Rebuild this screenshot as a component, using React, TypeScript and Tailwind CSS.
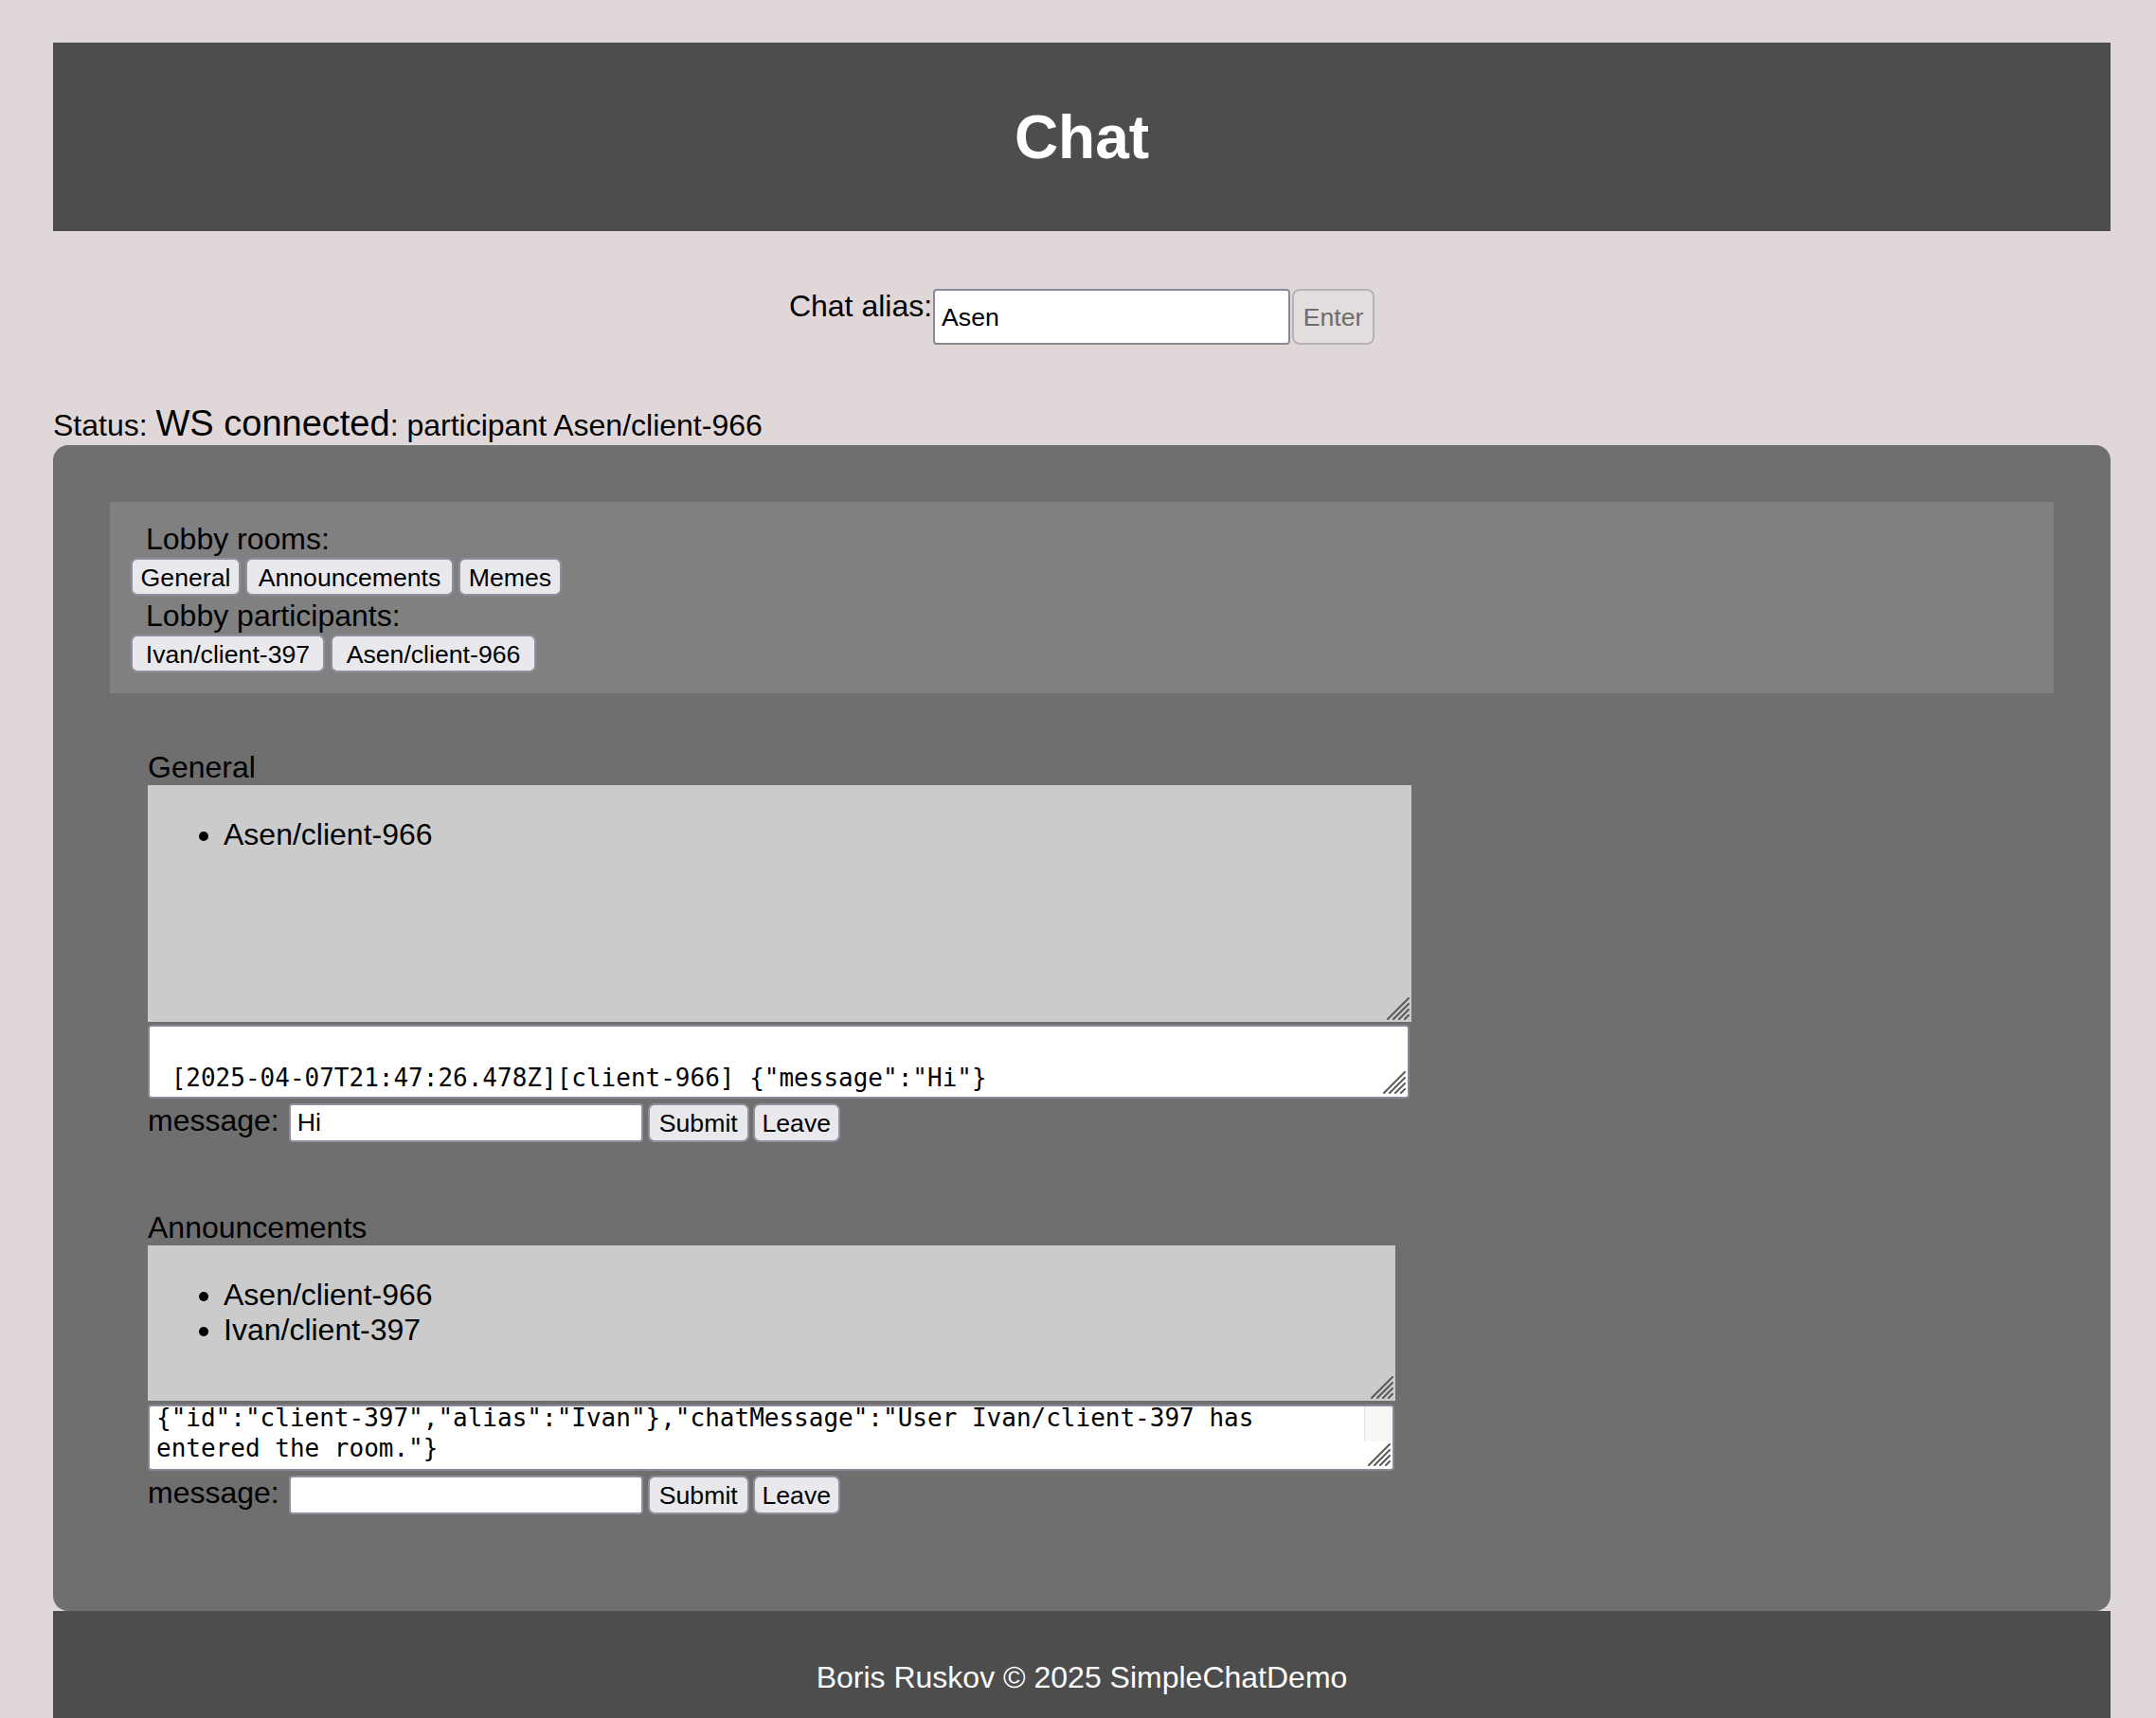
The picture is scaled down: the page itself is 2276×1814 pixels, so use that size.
import React from "react";

function ResizeHandle({ className }: { className: string }) {
  return (
    <svg className={className} width="24" height="24" viewBox="0 0 24 24" aria-hidden="true">
      <g stroke="#5a5a5a" strokeWidth="2" strokeLinecap="round">
        <line x1="1" y1="23" x2="23" y2="1" />
        <line x1="7" y1="23" x2="23" y2="7" />
        <line x1="13" y1="23" x2="23" y2="13" />
        <line x1="19" y1="23" x2="23" y2="19" />
      </g>
    </svg>
  );
}

function Btn({ label, w, h = "h-[40px]" }: { label: string; w: string; h?: string }) {
  return (
    <button
      className={`${w} ${h} shrink-0 rounded-[7px] border-2 border-[#8f8f9d] bg-[#e9e9ed] pt-[2px] text-[26.67px] leading-none text-black whitespace-nowrap flex items-center justify-center`}
    >
      {label}
    </button>
  );
}

function MessageRow({ value }: { value: string }) {
  return (
    <div className="flex items-start mt-[5px]">
      <span className="leading-[37px]">message:</span>
      <input
        defaultValue={value}
        className="ml-[10px] w-[374px] h-[41px] rounded-[4px] border-2 border-[#8f8f9d] bg-white pl-[7px] text-[26.67px] text-black outline-none"
      />
      <div className="flex gap-[4px] ml-[5px]">
        <Btn label="Submit" w="w-[107px]" h="h-[41px]" />
        <Btn label="Leave" w="w-[92px]" h="h-[41px]" />
      </div>
    </div>
  );
}

export default function App() {
  return (
    <div className="min-h-screen bg-[#e0d8d8] pl-[56px] pr-[48px] pt-[45px] font-['Liberation_Sans',Arial,sans-serif] text-[32px] text-black">
      {/* Header */}
      <header className="h-[199px] bg-[#4d4d4d] flex items-center justify-center">
        <h1 className="text-[64px] font-bold text-white leading-none">Chat</h1>
      </header>

      {/* Alias row */}
      <div className="mt-[61px] flex justify-center items-start">
        <span className="leading-[37px]">Chat alias:</span>
        <input
          defaultValue="Asen"
          className="ml-[1px] w-[377px] h-[59px] rounded-[4px] border-2 border-[#8a8995] bg-white pl-[7px] pt-[2px] text-[26.67px] text-black outline-none"
        />
        <button className="ml-[2px] w-[87px] h-[59px] rounded-[8px] border-2 border-[#b6b1b6] bg-[#e3dddd] text-[26.67px] text-[#6d6d6d]">
          Enter
        </button>
      </div>

      {/* Status */}
      <div className="mt-[64px] leading-none whitespace-nowrap">
        Status: <span className="text-[38px]">WS connected</span>: participant Asen/client-966
      </div>

      {/* Main panel */}
      <main className="mt-[4px] bg-[#6f6f6f] rounded-[16px] pt-[60px] px-[60px] pb-[102px]">
        {/* Lobby */}
        <section className="bg-[#808080] pt-[21px] pb-[22px] px-[22px]">
          <div className="pl-[16px] leading-[37px]">Lobby rooms:</div>
          <div className="flex gap-[5px] mt-[1px]">
            <Btn label="General" w="w-[116px]" />
            <Btn label="Announcements" w="w-[220px]" />
            <Btn label="Memes" w="w-[109px]" />
          </div>
          <div className="pl-[16px] leading-[37px] mt-[3px]">Lobby participants:</div>
          <div className="flex gap-[6px] mt-[1px]">
            <Btn label="Ivan/client-397" w="w-[205px]" />
            <Btn label="Asen/client-966" w="w-[217px]" />
          </div>
        </section>

        {/* General room */}
        <section className="mt-[60px] pl-[40px]">
          <div className="leading-[37px]">General</div>
          <div className="relative w-[1334px] h-[250px] bg-[#cbcbcb] pt-[34px]">
            <ul className="list-disc pl-[80px] leading-[37px]">
              <li>Asen/client-966</li>
            </ul>
            <ResizeHandle className="absolute right-[2px] bottom-[2px]" />
          </div>
          <div className="relative mt-[3px] w-[1332px] h-[78px] rounded-[4px] border-2 border-[#8a8796] bg-white overflow-hidden pl-[7px] pt-[38px] font-['DejaVu_Sans_Mono',monospace] text-[26px] leading-[32px] whitespace-pre">
            {' [2025-04-07T21:47:26.478Z][client-966] {"message":"Hi"}'}
            <ResizeHandle className="absolute right-[2px] bottom-[3px]" />
          </div>
          <MessageRow value="Hi" />
        </section>

        {/* Announcements room */}
        <section className="mt-[72px] pl-[40px]">
          <div className="leading-[37px]">Announcements</div>
          <div className="relative w-[1317px] h-[164px] bg-[#cbcbcb] pt-[34px]">
            <ul className="list-disc pl-[80px] leading-[37px]">
              <li>Asen/client-966</li>
              <li>Ivan/client-397</li>
            </ul>
            <ResizeHandle className="absolute right-[2px] bottom-[2px]" />
          </div>
          <div className="relative mt-[4px] w-[1316px] h-[70px] rounded-[4px] border-2 border-[#8a8796] bg-white overflow-hidden pl-[7px] font-['DejaVu_Sans_Mono',monospace] text-[26px] leading-[32px] whitespace-pre">
            <div className="-mt-[4px]">
              <div>{'{"id":"client-397","alias":"Ivan"},"chatMessage":"User Ivan/client-397 has'}</div>
              <div>{'entered the room."}'}</div>
            </div>
            <div className="absolute right-0 top-0 w-[30px] h-[37px] bg-[#f7f7f7] border-l border-[#e3e3e3]" />
            <ResizeHandle className="absolute right-[2px] bottom-[3px]" />
          </div>
          <MessageRow value="" />
        </section>
      </main>

      {/* Footer */}
      <footer className="bg-[#4d4d4d] pt-[52px] pb-[52px] text-center text-white leading-[37px]">
        Boris Ruskov © 2025 SimpleChatDemo
      </footer>
    </div>
  );
}
